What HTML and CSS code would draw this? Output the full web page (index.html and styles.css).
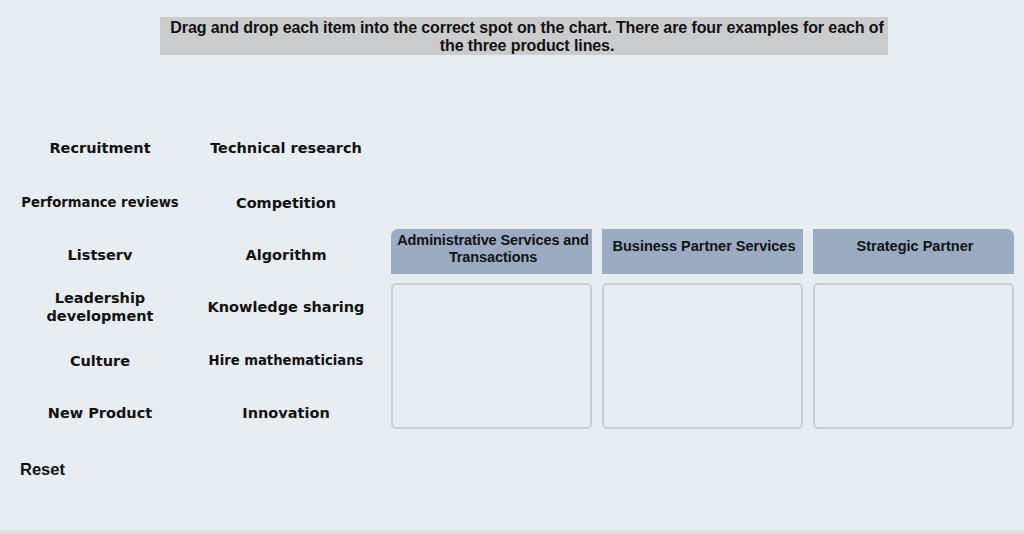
FILE: index.html
```html
<!DOCTYPE html>
<html>
<head>
<meta charset="utf-8">
<link rel="stylesheet" href="styles.css">
</head>
<body>
<div class="page">
  <div class="title">Drag and drop each item into the correct spot on the chart. There are four examples for each of<br>the three product lines.</div>
  <div class="main">
    <div class="left">
      <div class="items">
        <div class="item">Recruitment</div>
        <div class="item">Technical research</div>
        <div class="item small">Performance reviews</div>
        <div class="item">Competition</div>
        <div class="item">Listserv</div>
        <div class="item">Algorithm</div>
        <div class="item">Leadership<br>development</div>
        <div class="item">Knowledge sharing</div>
        <div class="item">Culture</div>
        <div class="item small">Hire mathematicians</div>
        <div class="item">New Product</div>
        <div class="item">Innovation</div>
      </div>
      <div class="reset">Reset</div>
    </div>
    <div class="chart">
      <div class="head first two">Administrative Services and<br>Transactions</div>
      <div class="head">Business Partner Services</div>
      <div class="head last">Strategic Partner</div>
      <div class="drop"></div>
      <div class="drop"></div>
      <div class="drop"></div>
    </div>
  </div>
</div>
</body>
</html>
```
FILE: styles.css
```css
html, body {
  margin: 0;
  padding: 0;
  background: #dcdfe2;
}
.page {
  width: 1024px;
  height: 530px;
  background: #e8edf1;
  overflow: hidden;
  color: #111;
}
.title {
  margin: 17px 0 0 160px;
  width: 728px;
  height: 38px;
  box-sizing: border-box;
  padding: 2px 0 0 6px;
  background: #cbcccd;
  font-family: "Liberation Sans", Arial, sans-serif;
  font-weight: bold;
  font-size: 16px;
  line-height: 18px;
  text-align: center;
  letter-spacing: -0.1px;
  white-space: nowrap;
}
.main {
  display: flex;
  align-items: flex-start;
  margin-top: 66px;
}
.left {
  width: 391px;
}
.items {
  display: grid;
  grid-template-columns: 200px 172px;
  grid-template-rows: 53px 57px 48px 56px 52px 52px;
}
.item {
  display: flex;
  align-items: center;
  justify-content: center;
  text-align: center;
  font-family: "DejaVu Sans", Verdana, sans-serif;
  font-weight: bold;
  font-size: 14.5px;
  line-height: 18px;
}
.item.small {
  font-size: 13.2px;
}
.reset {
  margin: 21px 0 0 20px;
  font-family: "Liberation Sans", Arial, sans-serif;
  font-weight: bold;
  font-size: 16.5px;
  line-height: 18px;
}
.chart {
  margin-top: 108px;
  display: grid;
  grid-template-columns: 201px 201px 201px;
  grid-template-rows: 45px 146px;
  column-gap: 10px;
  row-gap: 9px;
}
.head {
  background: #9aabc2;
  text-align: center;
  padding: 9px 0 0 3px;
  font-family: "Liberation Sans", Arial, sans-serif;
  font-weight: bold;
  font-size: 14.5px;
  line-height: 17px;
  white-space: nowrap;
}
.head.two {
  padding-top: 3px;
  letter-spacing: -0.1px;
}
.head.first {
  border-top-left-radius: 7px;
}
.head.last {
  border-top-right-radius: 7px;
}
.drop {
  border: 2px solid #c9cdd1;
  border-radius: 5px;
}
```
